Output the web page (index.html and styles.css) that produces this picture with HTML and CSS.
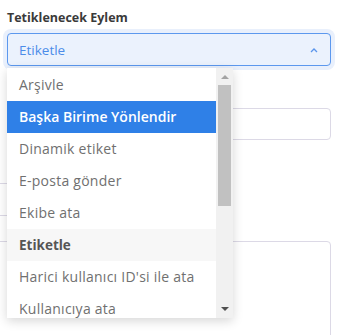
FILE: index.html
```html
<!DOCTYPE html>
<html lang="tr">
<head>
    <meta charset="UTF-8">
    <title>Tetiklenecek Eylem</title>
    <link rel="stylesheet" href="styles.css">
</head>
<body>
    <div class="form">
        <div class="form-group">
            <label class="form-label">Tetiklenecek Eylem</label>
            <div class="select-box">
                <span class="select-value">Etiketle</span>
                <svg class="select-arrow" width="8" height="5" viewBox="0 0 8 5">
                    <path d="M1 4 L4 1 L7 4" fill="none" stroke="#5a95ec" stroke-width="1.3"/>
                </svg>
            </div>

            <!-- açılır liste -->
            <div class="dropdown">
                <ul class="dropdown-list">
                    <li class="dropdown-item">Arşivle</li>
                    <li class="dropdown-item hover">Başka Birime Yönlendir</li>
                    <li class="dropdown-item">Dinamik etiket</li>
                    <li class="dropdown-item">E-posta gönder</li>
                    <li class="dropdown-item">Ekibe ata</li>
                    <li class="dropdown-item selected">Etiketle</li>
                    <li class="dropdown-item">Harici kullanıcı ID'si ile ata</li>
                    <li class="dropdown-item">Kullanıcıya ata</li>
                </ul>
                <div class="scrollbar">
                    <span class="scroll-up"></span>
                    <div class="scroll-track">
                        <div class="scroll-thumb"></div>
                    </div>
                    <span class="scroll-down"></span>
                </div>
            </div>
        </div>

        <div class="field field-first"></div>
        <div class="field field-half"></div>
        <div class="field field-area"></div>
    </div>
</body>
</html>
```

FILE: styles.css
```css
body {
    margin: 0;
    padding: 0;
    background: #ffffff;
    font-family: 'Open Sans', 'Liberation Sans', sans-serif;
    overflow: hidden;
}

.form {
    height: 335px;
    box-sizing: border-box;
    overflow: hidden;
    padding: 9px 11px 0 7px;
}

.form-group {
    position: relative;
}

.form-label {
    display: block;
    font-size: 12.5px;
    font-weight: 700;
    color: #3a3a3a;
    line-height: 18px;
    margin-bottom: 6px;
}

.select-box {
    height: 31px;
    display: flex;
    align-items: center;
    justify-content: space-between;
    padding: 0 12px 0 11px;
    border: 1px solid #5c98ee;
    border-radius: 4px;
    background: #ebf2fd;
    box-shadow: 0 0 0 4px #e9f0fc;
}

.select-value {
    font-size: 13.5px;
    color: #4c8ce9;
}

.select-arrow {
    margin-top: 1px;
}

.dropdown {
    position: absolute;
    top: 59px;
    left: 0;
    width: 226px;
    height: 250px;
    display: flex;
    background: #ffffff;
    box-shadow: 0 3px 10px rgba(0, 0, 0, 0.16);
    z-index: 10;
    overflow: hidden;
}

.dropdown-list {
    list-style: none;
    margin: 0;
    padding: 1px 0 0 0;
    flex: 1;
}

.dropdown-item {
    height: 32px;
    line-height: 32px;
    padding: 0 12px;
    font-size: 14px;
    letter-spacing: 0.25px;
    color: #707070;
    white-space: nowrap;
}

.dropdown-item.hover {
    background: #2f80e7;
    color: #ffffff;
    font-weight: 600;
    letter-spacing: 0;
}

.dropdown-item.selected {
    background: #f7f7f7;
    color: #555555;
    font-size: 13.5px;
    font-weight: 700;
    letter-spacing: 0;
}

.scrollbar {
    width: 17px;
    display: flex;
    flex-direction: column;
    align-items: center;
    background: #f1f1f1;
}

.scroll-up,
.scroll-down {
    width: 0;
    height: 0;
    border-left: 4px solid transparent;
    border-right: 4px solid transparent;
}

.scroll-up {
    margin-top: 7px;
    border-bottom: 4px solid #a3a3a3;
}

.scroll-down {
    margin-bottom: 7px;
    border-top: 4px solid #505050;
}

.scroll-track {
    flex: 1;
    width: 100%;
    padding: 6px 2px 0;
    box-sizing: border-box;
}

.scroll-thumb {
    height: 121px;
    background: #c1c1c1;
}

.field {
    border: 1px solid #dcd9e6;
    border-radius: 4px;
    box-sizing: border-box;
}

.field-first {
    margin-top: 42px;
    height: 32px;
}

.field-half {
    margin: 43px 0 0 -12px;
    width: 220px;
    height: 33px;
}

.field-area {
    margin: 25px 0 0 -12px;
    height: 120px;
}
```
